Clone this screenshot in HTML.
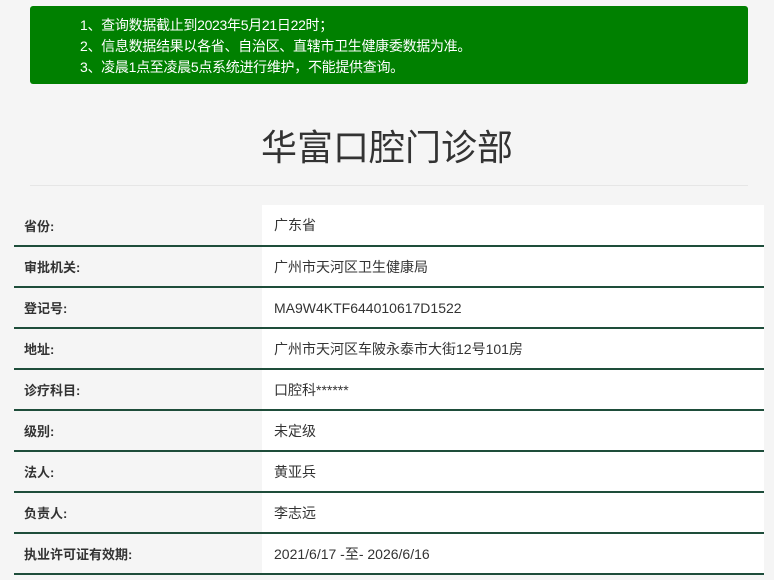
<!DOCTYPE html>
<html><head><meta charset="utf-8"><style>
*{margin:0;padding:0;box-sizing:border-box}
body{width:774px;height:580px;overflow:hidden;background:#f5f5f5;font-family:"Liberation Sans","Noto Sans CJK SC",sans-serif;color:#333;position:relative}
.notice{position:absolute;left:30px;top:6px;width:718px;height:78px;background:#008000;border-radius:3px;color:#fff;font-size:14px;padding:9px 0 0 50px;line-height:21px;letter-spacing:-0.3px}
h1{position:absolute;left:0;width:774px;top:124px;text-align:center;font-weight:normal;font-size:36px;color:#333;line-height:48px}
.hr{position:absolute;left:30px;width:718px;top:185px;border-top:1px solid #e6e6e6}
table{position:absolute;left:14px;top:205px;width:750px;border-collapse:collapse}
td{height:41px;border-bottom:2px solid #1e4d3a;font-size:14px;vertical-align:middle}
td.l{width:248px;padding-left:10px;font-weight:bold;font-size:13px;background:#f5f5f5}
td.v{padding-left:12px;background:#fff}
</style></head><body>
<div class="notice">1、查询数据截止到2023年5月21日22时；<br>2、信息数据结果以各省、自治区、直辖市卫生健康委数据为准。<br>3、凌晨1点至凌晨5点系统进行维护，不能提供查询。</div>
<h1>华富口腔门诊部</h1>
<div class="hr"></div>
<table>
<tr><td class="l">省份:</td><td class="v">广东省</td></tr>
<tr><td class="l">审批机关:</td><td class="v">广州市天河区卫生健康局</td></tr>
<tr><td class="l">登记号:</td><td class="v">MA9W4KTF644010617D1522</td></tr>
<tr><td class="l">地址:</td><td class="v">广州市天河区车陂永泰市大街12号101房</td></tr>
<tr><td class="l">诊疗科目:</td><td class="v">口腔科******</td></tr>
<tr><td class="l">级别:</td><td class="v">未定级</td></tr>
<tr><td class="l">法人:</td><td class="v">黄亚兵</td></tr>
<tr><td class="l">负责人:</td><td class="v">李志远</td></tr>
<tr><td class="l">执业许可证有效期:</td><td class="v">2021/6/17 -至- 2026/6/16</td></tr>
</table>
</body></html>
